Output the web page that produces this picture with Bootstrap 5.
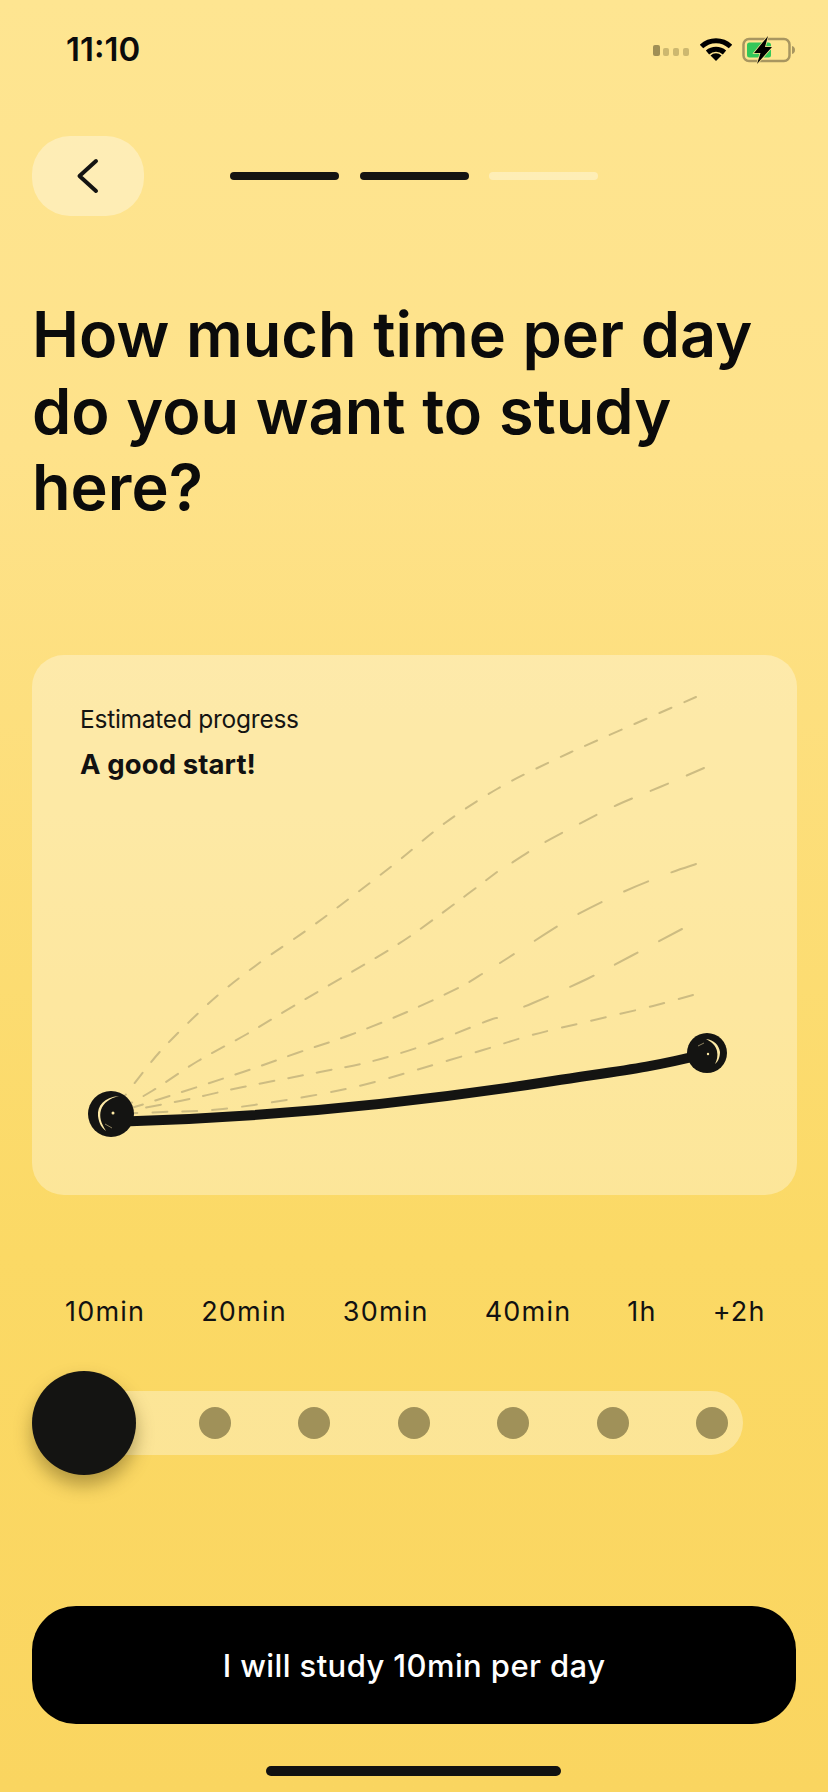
<!DOCTYPE html>
<html lang="en">
<head>
  <meta charset="UTF-8">
  <meta name="viewport" content="width=device-width, initial-scale=1.0">
  <title>Study time</title>
  <link href="https://cdn.jsdelivr.net/npm/bootstrap@5.3.3/dist/css/bootstrap.min.css" rel="stylesheet">
  <style>
    body { margin: 0; background: #fad560; font-family: Inter, "Liberation Sans", sans-serif; color: #111; }
    .screen { width: 828px; height: 1792px; overflow: hidden; background: linear-gradient(180deg, #fee591 0%, #fee28a 25%, #fbd965 70%, #fad560 100%); }
    .status-row { height: 100px; padding: 0 32px 0 66px; }
    .status-time { font-size: 33px; font-weight: 600; color: #0b0b0b; letter-spacing: 0; }
    .signal-a { width: 7px; height: 11px; border-radius: 2px; background: #a08f55; margin-right: 3px; }
    .signal-b { width: 6px; height: 8px; border-radius: 2px; background: #cdb86f; margin-right: 4px; }
    .wifi-ico { margin-left: 7px; margin-bottom: 3px; }
    .batt-ico { margin-left: 10px; }
    .top-row { height: 80px; margin-top: 36px; padding-left: 32px; }
    .back-btn { width: 112px; height: 80px; border-radius: 38px; background: rgba(255,255,255,.35); }
    .step-bars { margin-left: 86px; gap: 20.5px; }
    .step-seg { width: 109px; height: 8px; border-radius: 4px; background: #141412; }
    .step-seg.todo { background: rgba(255,255,255,.36); }
    .question { margin: 80px 32px 0; font-size: 63px; line-height: 76.5px; font-weight: 600; color: #0b0b0b; letter-spacing: 0; word-spacing: 0.8px; }
    .chart-box { margin: 129.5px 31px 0 32px; height: 540px; border-radius: 32px; background: rgba(255,255,255,.33); border: 0; padding: 48px 48px; }
    .chart-box svg { position: absolute; inset: 0; width: 100%; height: 100%; }
    .chart-label { font-size: 24.5px; line-height: 32px; letter-spacing: -0.25px; color: #141412; }
    .chart-note { font-size: 27.5px; line-height: 32px; font-weight: 700; margin-top: 13px; letter-spacing: 0.1px; color: #111; }
    .dash { fill: none; stroke: #cdbc82; stroke-width: 2; stroke-linecap: round; }
    .time-row { margin-top: 99px; padding-left: 65px; gap: 56px; height: 36px; font-size: 27px; line-height: 36px; color: #111; letter-spacing: 1.2px; }
    .slider-track { margin: 61px 0 0 32px; width: 711px; height: 64px; padding-left: 167px; gap: 67.4px; background: rgba(255,255,255,.33); }
    .slider-dot { width: 32px; height: 32px; border-radius: 50%; background: #a09159; }
    .slider-knob { position: absolute; left: 0; top: -20px; width: 104px; height: 104px; border-radius: 50%; background: #141412; box-shadow: 0 10px 18px rgba(70,55,10,.4); }
    .study-btn { display: block; width: 764px; height: 118px; margin: 151px 0 0 32px; padding-top: 9px; border-radius: 44px; border: 0; background: #000; color: #fff; font-size: 31px; font-weight: 500; letter-spacing: 0.4px; }
    .home-bar { width: 295px; height: 10px; margin: 42px 0 0 266px; border-radius: 5px; background: #111; }
  </style>
</head>
<body>
  <div class="screen">
    <div class="status-row d-flex align-items-center">
      <div class="status-time flex-grow-1">11:10</div>
      <div class="d-flex align-items-end">
        <span class="signal-a"></span><span class="signal-b"></span><span class="signal-b"></span><span class="signal-b"></span>
      </div>
      <svg class="wifi-ico" width="32" height="24" viewBox="0 0 32 24" fill="none">
        <path d="M1.5 9.500A21 21 0 0 1 30.500 9.500" stroke="#000" stroke-width="5"/>
        <path d="M7.500 15.500A13 13 0 0 1 24.500 15.500" stroke="#000" stroke-width="5"/>
        <path d="M16 24L10.500 18.500A8 8 0 0 1 21.500 18.500Z" fill="#000"/>
      </svg>
      <svg class="batt-ico" width="54" height="28" viewBox="0 0 54 28" fill="none">
        <rect x="1.500" y="3" width="46" height="22" rx="5.500" stroke="#a89660" stroke-width="2.500"/>
        <path d="M50 10c2 .5 3 2 3 4s-1 3.500-3 4z" fill="#a89660"/>
        <rect x="5" y="6.500" width="24" height="15" rx="2.500" fill="#34c759"/>
        <path d="M15 28L18.500 17H12L26 0L23 11H30Z" fill="#000" stroke="#fee591" stroke-width="1.500" paint-order="stroke"/>
      </svg>
    </div>

    <div class="top-row d-flex align-items-center">
      <div class="back-btn d-flex align-items-center justify-content-center">
        <svg width="24" height="36" viewBox="0 0 24 36" fill="none"><path d="M20 3L3.500 18L20 33" stroke="#141412" stroke-width="4" stroke-linecap="round" stroke-linejoin="round"/></svg>
      </div>
      <div class="step-bars d-flex">
        <span class="step-seg"></span><span class="step-seg"></span><span class="step-seg todo"></span>
      </div>
    </div>

    <h1 class="question">How much time per day do you want to study here?</h1>

    <div class="card chart-box position-relative">
      <svg id="chart" viewBox="32 655 765 540" fill="none">
        <path d="M111 1122C260 1118 400 1105 553 1081C610 1072 650 1068 700 1055" stroke="#141412" stroke-width="10" stroke-linecap="round"/>
        <circle cx="111" cy="1114" r="23" fill="#141412"/>
        <path d="M119 1096C104 1097 97 1106 98 1116C99 1124 102 1128 106 1131C101 1123 99 1117 101 1110C103 1103 110 1098 119 1096Z" fill="#fde9a5"/>
        <circle cx="113" cy="1113" r="1.500" fill="#fde9a5"/>
        <path d="M105 1124L112 1128" stroke="#8d8260" stroke-width="1"/>
        <circle cx="707" cy="1053" r="20" fill="#141412"/>
        <path d="M706 1039C714 1040 719 1045 720 1052C720 1057 718 1062 715 1064C717 1060 718 1056 717 1051C716 1046 712 1042 706 1039Z" fill="#fde9a5"/>
        <circle cx="708" cy="1054" r="1.200" fill="#fde9a5"/>
        <path d="M698 1046L704 1043" stroke="#8d8260" stroke-width="1"/>
      </svg>
      <div class="chart-label">Estimated progress</div>
      <div class="chart-note">A good start!</div>
    </div>

    <div class="time-row d-flex">
      <span>10min</span><span>20min</span><span>30min</span><span>40min</span><span>1h</span><span>+2h</span>
    </div>

    <div class="slider-track rounded-pill d-flex align-items-center position-relative">
      <span class="slider-knob"></span>
      <span class="slider-dot"></span><span class="slider-dot"></span><span class="slider-dot"></span><span class="slider-dot"></span><span class="slider-dot"></span><span class="slider-dot"></span>
    </div>

    <button type="button" class="btn study-btn">I will study 10min per day</button>
    <div class="home-bar"></div>
  </div>
  <script src="https://cdn.jsdelivr.net/npm/bootstrap@5.3.3/dist/js/bootstrap.bundle.min.js"></script>
  <script>
    // dashed projections, read off the reference: [dash, gap, points]
    // the points run from the far end back, so each line finishes on a dash there
    const curvas = [
      [13, 14, [[696,697],[605,737],[552,761],[497,789],[445,823],[397,862],[350,898],[307,930],[262,961],[217,996],[172,1039],[148,1066],[111,1114]]],
      [19, 20, [[704,768],[660,787],[617,805],[577,825],[540,845],[507,866]]],
      [14, 13, [[497,872],[453,905],[403,941],[350,973],[297,1004],[247,1034],[198,1061],[152,1091],[111,1114]]],
      [26, 25, [[696,864],[667,874],[623,892],[573,917],[522,949],[500,963]]],
      [15, 13, [[482,974],[460,987],[407,1012],[350,1035],[297,1053],[243,1072],[157,1100],[111,1114]]],
      [26, 24, [[682,929],[633,955],[587,979],[533,1003],[510,1012]]],
      [15, 14, [[497,1018],[487,1021],[428,1044],[373,1061],[320,1072],[243,1087],[180,1101],[111,1114]]],
      [15, 15, [[693,995],[653,1006],[590,1021],[532,1035],[483,1050],[423,1068],[367,1084],[310,1096],[223,1109],[163,1112],[111,1114]]]
    ];

    // catmull-rom a bezier, para que no se vean quiebres
    function suave(p) {
      let d = `M${p[0][0]} ${p[0][1]}`;
      for (let i = 0; i < p.length - 1; i++) {
        const a = p[i - 1] || p[i], b = p[i], c = p[i + 1], e = p[i + 2] || c;
        d += `C${b[0] + (c[0] - a[0]) / 6} ${b[1] + (c[1] - a[1]) / 6} ${c[0] - (e[0] - b[0]) / 6} ${c[1] - (e[1] - b[1]) / 6} ${c[0]} ${c[1]}`;
      }
      return d;
    }

    const chart = document.getElementById("chart");
    curvas.forEach(([dash, gap, puntos]) => {
      const path = document.createElementNS("http://www.w3.org/2000/svg", "path");
      path.setAttribute("class", "dash");
      path.setAttribute("stroke-dasharray", `${dash} ${gap}`);
      path.setAttribute("d", suave(puntos));
      chart.prepend(path);
    });
  </script>
</body>
</html>
